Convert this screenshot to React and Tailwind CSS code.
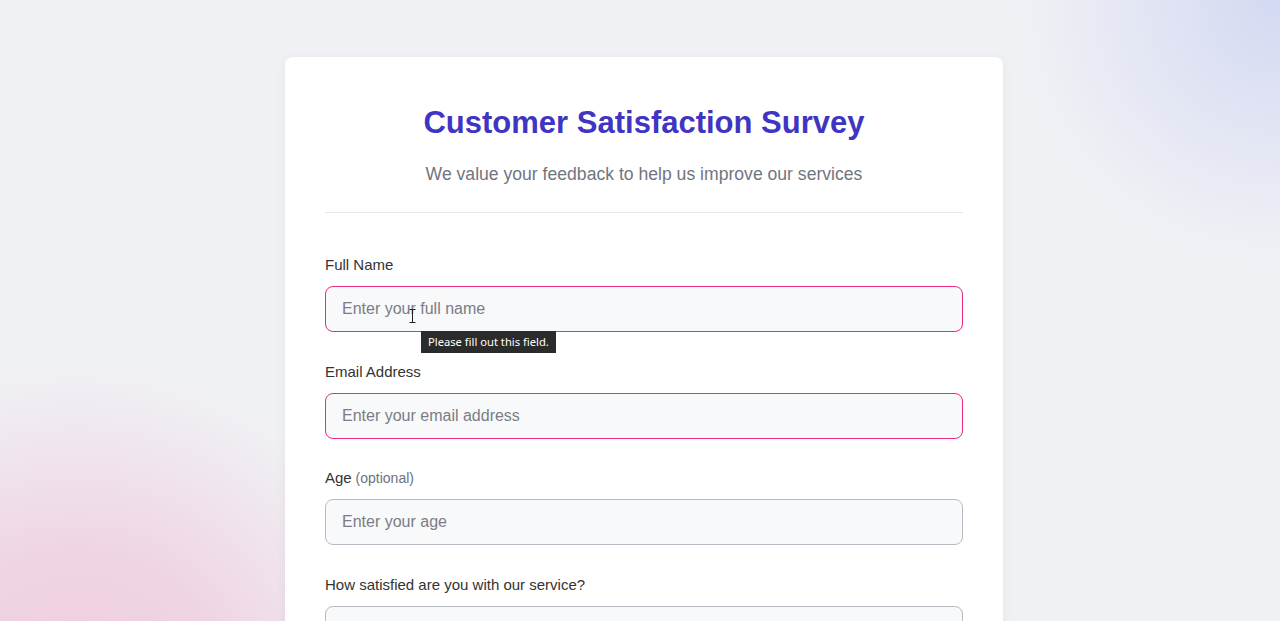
import React from 'react';

const inputBase =
  'w-full h-[46px] px-4 rounded-lg bg-[#f8f9fb] text-[16px] text-gray-800 placeholder:text-[#7a7d85] outline-none border';

function Field({ label, optional, placeholder, required, type = 'text', children }) {
  return (
    <div className="mb-[28.5px] relative">
      <label className="block text-[15px] leading-[22px] text-[#333] mb-[10px]">
        {label}
        {optional && <span className="text-[14px] text-[#6b7280]"> (optional)</span>}
      </label>
      <input
        type={type}
        placeholder={placeholder}
        className={`${inputBase} ${required ? 'border-[#ec2a84]' : 'border-[#b6bac2]'}`}
      />
      {children}
    </div>
  );
}

export default function App() {
  return (
    <div
      className="min-h-[621px] w-full overflow-hidden bg-[#f0f1f5] bg-[radial-gradient(circle_at_100%_0%,#d3d9f2_0,#dde1f3_90px,rgba(240,241,245,0)_260px),radial-gradient(circle_at_6%_98%,#f0cde0_0,#efd4e3_150px,rgba(240,241,245,0)_340px)]"
      style={{ fontFamily: '"Liberation Sans", Arial, sans-serif' }}
    >
      <div className="pt-[57px] pl-2">
        <div className="mx-auto w-[718px] bg-white rounded-lg shadow-[0_2px_12px_rgba(0,0,0,0.05)] px-10 pt-[48px] pb-10">
          {/* header */}
          <div className="text-center border-b border-[#e6e8ec] pb-6">
            <h1 className="text-[31px] leading-[36px] font-bold text-[#3f35c2]">
              Customer Satisfaction Survey
            </h1>
            <p className="mt-5 text-[17.6px] leading-[27px] text-[#717580]">
              We value your feedback to help us improve our services
            </p>
          </div>

          <form className="pt-[41px]" onSubmit={(e) => e.preventDefault()}>
            <Field label="Full Name" placeholder="Enter your full name" required>
              {/* text cursor */}
              <svg
                className="absolute left-[84px] top-[55px]"
                width="7"
                height="14"
                viewBox="0 0 7 14"
              >
                <path d="M0.5 0.5h6M3.5 0.5v13M0.5 13.5h6" stroke="#222" strokeWidth="1" fill="none" />
              </svg>
              {/* validation tooltip */}
              <div
                className="absolute left-[96px] top-[77px] h-[22px] px-[7px] flex items-center bg-[#2b2b2b] text-white text-[11.2px] whitespace-nowrap z-10"
                style={{ fontFamily: '"Noto Sans", "Open Sans", sans-serif' }}
              >
                Please fill out this field.
              </div>
            </Field>
            <Field label="Email Address" placeholder="Enter your email address" type="email" required />
            <Field label="Age" optional placeholder="Enter your age" type="number" />
            <Field label="How satisfied are you with our service?" placeholder="" />
          </form>
        </div>
      </div>
    </div>
  );
}
